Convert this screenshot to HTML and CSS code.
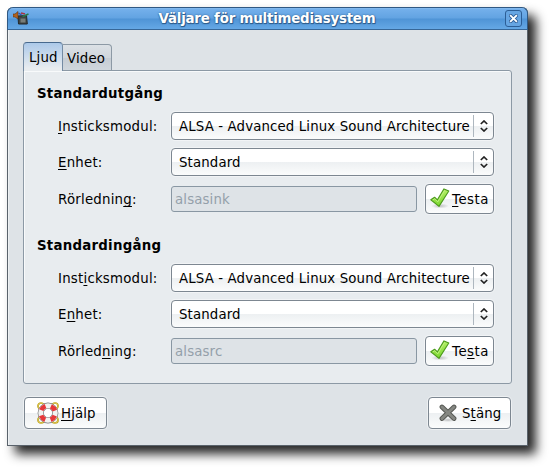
FILE: index.html
```html
<!DOCTYPE html>
<html lang="sv">
<head>
<meta charset="utf-8">
<title>Väljare för multimediasystem</title>
<link rel="stylesheet" href="styles.css">
</head>
<body>
<svg width="0" height="0" class="defs">
  <defs>
    <linearGradient id="green" x1="0" y1="0" x2="0" y2="1"><stop offset="0" stop-color="#b5ee68"/><stop offset="1" stop-color="#79d72d"/></linearGradient>
    <radialGradient id="shade"><stop offset="0" stop-color="#000" stop-opacity=".22"/><stop offset="1" stop-color="#000" stop-opacity="0"/></radialGradient>
    <symbol id="check" viewBox="0 0 20 20">
      <ellipse cx="10" cy="18" rx="9" ry="2.5" fill="url(#shade)"/>
      <path d="M.8 11.8 4.6 9.2 7.4 11.8 14 .9 18.8 3 9 18.4z" fill="url(#green)" stroke="#4c9a1c" stroke-width="1.1" stroke-linejoin="round"/>
      <path d="M2.7 12 4.6 10.8 7.8 13.8 14.6 2.4" fill="none" stroke="#c8f48c" stroke-width=".8"/>
    </symbol>
    <symbol id="arrows" viewBox="0 0 8 12"><path d="M.8 4 4 1 7.2 4M.8 8 4 11 7.2 8" fill="none" stroke="#222" stroke-width="1.7"/></symbol>
  </defs>
</svg>
<main class="window">
  <header class="titlebar">
    <svg class="app-icon" viewBox="0 0 16 14">
      <path d="M5 5 13.5 4.5 14.3 13H5.5z" fill="#3f4442" stroke="#24292b"/>
      <path d="M7.5 7.5h5v4h-5z" fill="#777d79"/>
      <path d="M0 3h2L5 .5v7.5L2 6H0z" fill="#b0621e" stroke="#5c3216" stroke-width=".6"/>
      <path d="M5.5 2 8.5 4" stroke="#3553b0" stroke-width="1.5"/>
      <path d="M8 2 12 3" stroke="#a83340" stroke-width="1.5"/>
      <path d="M9.5 5.5 15.5 3" stroke="#277a4a" stroke-width="1.5"/>
    </svg>
    <h1 class="title">Väljare för multimediasystem</h1>
    <button class="close" aria-label="Stäng"><svg viewBox="0 0 10 10"><path d="M2 2 8 8M8 2 2 8" stroke="#2f5f98" stroke-width="4" stroke-linecap="square"/><path d="M2 2 8 8M8 2 2 8" stroke="#fff" stroke-width="2.1" stroke-linecap="square"/></svg></button>
  </header>
  <nav class="tabs">
    <div class="tab active">Ljud</div>
    <div class="tab">Video</div>
  </nav>
  <section class="panel">
    <div class="group">
      <h2>Standardutgång</h2>
      <div class="row"><label><u>I</u>nsticksmodul:</label><div class="combo"><span>ALSA - Advanced Linux Sound Architecture</span><i><svg><use href="#arrows"/></svg></i></div></div>
      <div class="row"><label><u>E</u>nhet:</label><div class="combo"><span>Standard</span><i><svg><use href="#arrows"/></svg></i></div></div>
      <div class="row last"><label>Rörlednin<u>g</u>:</label><div class="entry">alsasink</div><button class="button test"><svg><use href="#check"/></svg><span><u>T</u>esta</span></button></div>
    </div>
    <div class="group">
      <h2>Standardingång</h2>
      <div class="row"><label>Inst<u>i</u>cksmodul:</label><div class="combo"><span>ALSA - Advanced Linux Sound Architecture</span><i><svg><use href="#arrows"/></svg></i></div></div>
      <div class="row"><label>E<u>n</u>het:</label><div class="combo"><span>Standard</span><i><svg><use href="#arrows"/></svg></i></div></div>
      <div class="row last"><label>Rörled<u>n</u>ing:</label><div class="entry">alsasrc</div><button class="button test"><svg><use href="#check"/></svg><span>Te<u>s</u>ta</span></button></div>
    </div>
  </section>
  <footer class="actions">
    <button class="button action help">
      <svg viewBox="0 0 22 22">
        <g fill="none" stroke="#b99c14" stroke-width="1.7"><circle cx="4" cy="4" r="3"/><circle cx="18" cy="4" r="3"/><circle cx="4" cy="18" r="3"/><circle cx="18" cy="18" r="3"/></g>
        <g fill="none" stroke="#f3e27a" stroke-width=".5"><circle cx="4" cy="4" r="3"/><circle cx="18" cy="4" r="3"/><circle cx="4" cy="18" r="3"/><circle cx="18" cy="18" r="3"/></g>
        <circle cx="11" cy="11" r="7.3" fill="#fff" stroke="#77797a" stroke-width="6.2"/>
        <circle cx="11" cy="11" r="7.3" fill="none" stroke="#f2f2f0" stroke-width="4.9"/>
        <circle cx="11" cy="11" r="7.3" fill="none" stroke="#e6383a" stroke-width="4.7" stroke-dasharray="6 5.467" stroke-dashoffset="-2.73"/>
      </svg><span><u>H</u>jälp</span>
    </button>
    <button class="button action stop">
      <svg viewBox="0 0 18 18"><ellipse cx="9" cy="16" rx="8" ry="2" fill="url(#shade)"/><path d="M3 3 15 14.5M15 3 3 14.5" stroke="#555753" stroke-width="4.8" stroke-linecap="round"/><path d="M3 3 15 14.5M15 3 3 14.5" stroke="#858782" stroke-width="3" stroke-linecap="round"/></svg><span>S<u>t</u>äng</span>
    </button>
  </footer>
</main>
</body>
</html>
```
FILE: styles.css
```css
* { box-sizing: border-box; }
body {
  margin: 0;
  padding: 7px;
  width: 551px;
  height: 469px;
  overflow: hidden;
  background: #fff;
  font: 13.33px/16px "DejaVu Sans", sans-serif;
  letter-spacing: .13px;
  color: #000;
}
.defs { position: absolute; }
.window {
  display: flex;
  flex-direction: column;
  width: 521px;
  height: 439px;
  border: 1px solid #59626b;
  border-top: 0;
  border-radius: 6px 6px 0 0;
  background: #dee3e7;
  box-shadow: inset 1px 0 #eef1f3, 8px 8px 11px rgba(0, 0, 0, .85);
}
.titlebar {
  display: flex;
  align-items: center;
  height: 23px;
  margin: 0 -1px;
  padding: 0 5px 0 5px;
  border: 1px solid #2f5883;
  border-bottom-color: #376798;
  border-radius: 6px 6px 0 0;
  background: linear-gradient(#8dc0f2 0, #74b0eb 1px, #62a3e2 10px, #4f94d6 11px, #65a8e5 100%);
}
.app-icon { flex: none; width: 16px; height: 14px; margin-top: -1px; }
.title {
  flex: 1;
  margin: 0;
  text-align: center;
  font-size: 13.33px;
  line-height: 16px;
  letter-spacing: -.18px;
  color: #fff;
  text-shadow: 1px 1px #31608f, 0 0 2px #31608f, 0 1px 1px #31608f;
}
.close {
  display: grid;
  place-items: center;
  width: 17px;
  height: 17px;
  padding: 0;
  border: 1px solid #2c5e96;
  border-radius: 3px;
  background: #66a5e2;
}
.close svg { width: 9px; height: 9px; }
.tabs {
  display: flex;
  align-items: flex-end;
  height: 29px;
  margin: 12px 15px -1px;
  z-index: 1;
}
.tab {
  width: 49px;
  height: 27px;
  padding: 6px 0 0 4px;
  border: 1px solid #8c99a5;
  border-left: 0;
  border-radius: 0 4px 0 0;
  background: linear-gradient(#dce1e6, #d0d6dc 50%, #c5ccd3 51%, #d0d7dd);
}
.tab.active {
  width: 40px;
  height: 29px;
  padding: 7px 0 0 5px;
  border: 1px solid #47698e;
  border-color: #47698e #748ba3 #8c99a5;
  border-bottom: 0;
  border-radius: 4px 4px 0 0;
  background: linear-gradient(#acc9e9, #e8ecef 90%);
}
.panel {
  width: 489px;
  height: 314px;
  margin-left: 15px;
  padding: 15px 17px 0 13px;
  border: 1px solid #8c99a5;
  border-radius: 0 3px 3px 3px;
  background: #e8ecef;
  box-shadow: inset 1px 1px #f8fafb;
}
.group { height: 152px; }
h2 { margin: 0 0 10px; font-size: 13.33px; line-height: 16px; letter-spacing: .25px; }
.row { display: flex; align-items: center; height: 28px; margin-bottom: 8px; padding-left: 21px; }
.row.last { height: 30px; }
label { width: 113px; padding-top: 1px; white-space: nowrap; letter-spacing: .22px; }
u { text-decoration-thickness: 1px; text-underline-offset: 2px; text-decoration-skip-ink: none; }
.combo, .button {
  border: 1px solid #7d8791;
  border-radius: 4px;
  background: linear-gradient(#fff 50%, #edf0f2 51%, #fbfcfc);
  box-shadow: 0 0 0 1px rgba(255, 255, 255, .45);
}
.combo { display: flex; align-items: center; width: 323px; height: 28px; padding-left: 7px; white-space: nowrap; }
.combo span { flex: 1; padding-top: 1px; }
.combo i { display: grid; place-items: center; width: 20px; height: 22px; border-left: 1px solid #aeb7bf; }
.combo svg { width: 8px; height: 12px; }
.entry {
  width: 246px;
  height: 26px;
  margin-right: 8px;
  padding: 5px 3px 3px;
  border: 1px solid #8997a3;
  border-radius: 3px;
  background: #dee3e7;
  color: #94a0aa;
}
.button { display: flex; align-items: center; padding: 0; font: inherit; letter-spacing: .1px; color: #000; }
.button span { padding-top: 1px; }
.test { width: 69px; height: 30px; padding-left: 4px; gap: 2px; }
.test svg { width: 20px; height: 20px; margin-top: -2px; }
.test span { letter-spacing: .5px; }
.actions { display: flex; justify-content: space-between; margin: 13px 16px 0 16px; }
.action { width: 83px; height: 32px; }
.help { padding-left: 12px; gap: 2px; }
.help svg { width: 22px; height: 22px; }
.stop { padding-left: 10px; gap: 5px; }
.stop svg { width: 18px; height: 18px; }
```
